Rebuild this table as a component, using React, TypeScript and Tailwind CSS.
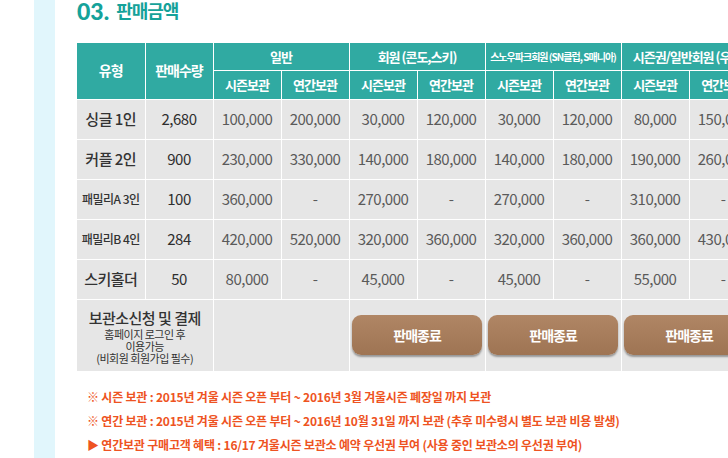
const groups = [
  { label: "일반", small: false },
  { label: "회원 (콘도,스키)", small: false },
  { label: "스노우파크회원 (SN클럽, S매니아)", small: true },
  { label: "시즌권/일반회원 (우대)", small: false },
];

const rows = [
  { name: "싱글 1인", small: false, qty: "2,680", prices: ["100,000", "200,000", "30,000", "120,000", "30,000", "120,000", "80,000", "150,000"] },
  { name: "커플 2인", small: false, qty: "900", prices: ["230,000", "330,000", "140,000", "180,000", "140,000", "180,000", "190,000", "260,000"] },
  { name: "패밀리A 3인", small: true, qty: "100", prices: ["360,000", "-", "270,000", "-", "270,000", "-", "310,000", "-"] },
  { name: "패밀리B 4인", small: true, qty: "284", prices: ["420,000", "520,000", "320,000", "360,000", "320,000", "360,000", "360,000", "430,000"] },
  { name: "스키홀더", small: false, qty: "50", prices: ["80,000", "-", "45,000", "-", "45,000", "-", "55,000", "-"] },
];

function EndButton() {
  return (
    <div className="mx-auto flex h-[40px] w-[130px] items-center justify-center rounded-[9px] bg-gradient-to-b from-[#b08665] to-[#9e7453] shadow-[0_2px_2px_rgba(0,0,0,0.35)]">
      <span className="text-[14px] font-bold tracking-[-1px] text-white">판매종료</span>
    </div>
  );
}

export default function App() {
  return (
    <div
      className="flex h-[458px] w-[728px] overflow-hidden bg-white"
      style={{ fontFamily: '"Noto Sans CJK KR", "Noto Sans", sans-serif' }}
    >
      <div className="ml-[34px] h-full w-[21px] shrink-0 bg-[#e1f6fc]" />

      <div className="ml-[22px] flex shrink-0 flex-col">
        {/* Title */}
        <div className="flex h-[43px] items-start">
          <span className="text-[23px] font-black leading-[23px] text-[#15a29a]" style={{ fontFamily: "Lato, sans-serif" }}>
            03.
          </span>
          <span className="ml-[7px] text-[18px] font-bold leading-[21px] tracking-[-1px] text-[#15a29a]">판매금액</span>
        </div>

        {/* Price table */}
        <table className="w-[680px] table-fixed border-collapse">
          <colgroup>
            {Array.from({ length: 10 }).map((_, i) => (
              <col key={i} className="w-[68px]" />
            ))}
          </colgroup>
          <thead>
            <tr className="h-[27px] bg-[#30aaa2] text-white">
              <th rowSpan={2} className="border border-white border-l-0 border-t-0 text-[14px] font-bold tracking-[-1px]">
                유형
              </th>
              <th rowSpan={2} className="border border-white border-t-0 text-[14px] font-bold tracking-[-1px]">
                판매수량
              </th>
              {groups.map((g) => (
                <th
                  key={g.label}
                  colSpan={2}
                  className={`whitespace-nowrap border border-white border-t-0 font-bold ${
                    g.small ? "text-[10px] tracking-[-1px]" : "text-[13px] tracking-[-1px]"
                  }`}
                >
                  {g.label}
                </th>
              ))}
            </tr>
            <tr className="h-[29px] bg-[#30aaa2] text-white">
              {groups.map((g) => (
                <>
                  <th key={g.label + "s"} className="border border-white text-[13px] font-bold tracking-[-1px]">
                    시즌보관
                  </th>
                  <th key={g.label + "y"} className="border border-white text-[13px] font-bold tracking-[-1px]">
                    연간보관
                  </th>
                </>
              ))}
            </tr>
          </thead>
          <tbody className="bg-[#e6e6e6]">
            {rows.map((r) => (
              <tr key={r.name} className="h-[40px]">
                <td
                  className={`border border-white border-l-0 text-center font-medium text-[#333] ${
                    r.small ? "text-[12px] tracking-[-0.5px]" : "text-[15px] tracking-[-0.5px]"
                  }`}
                >
                  {r.name}
                </td>
                <td className="border border-white text-center text-[15px] tracking-[-0.5px] text-[#2e2e2e]">{r.qty}</td>
                {r.prices.map((p, i) => (
                  <td key={i} className="border border-white text-center text-[15px] tracking-[-0.5px] text-[#5a5a5a]">
                    {p}
                  </td>
                ))}
              </tr>
            ))}
            <tr className="h-[72px]">
              <td colSpan={2} className="border border-white border-l-0 pt-[2px] text-center text-[#333]">
                <div className="text-[15px] font-medium leading-[18px] tracking-[-0.5px]">보관소신청 및 결제</div>
                <div className="mt-[1px] text-[11px] leading-[12px] tracking-[-0.5px]">
                  홈페이지 로그인 후
                  <br />
                  이용가능
                  <br />
                  (비회원 회원가입 필수)
                </div>
              </td>
              <td colSpan={2} className="border border-white" />
              <td colSpan={2} className="border border-white">
                <EndButton />
              </td>
              <td colSpan={2} className="border border-white">
                <EndButton />
              </td>
              <td colSpan={2} className="border border-white">
                <EndButton />
              </td>
            </tr>
          </tbody>
        </table>

        {/* Notes */}
        <div className="mt-[13px] pl-[10px] text-[12px] font-semibold leading-[24px] tracking-[-0.2px] text-[#ee5322]">
          <p>※ 시즌 보관 : 2015년 겨울 시즌 오픈 부터 ~ 2016년 3월 겨울시즌 폐장일 까지 보관</p>
          <p>※ 연간 보관 : 2015년 겨울 시즌 오픈 부터 ~ 2016년 10월 31일 까지 보관 (추후 미수령시 별도 보관 비용 발생)</p>
          <p>▶ 연간보관 구매고객 혜택 : 16/17 겨울시즌 보관소 예약 우선권 부여 (사용 중인 보관소의 우선권 부여)</p>
        </div>
      </div>
    </div>
  );
}
